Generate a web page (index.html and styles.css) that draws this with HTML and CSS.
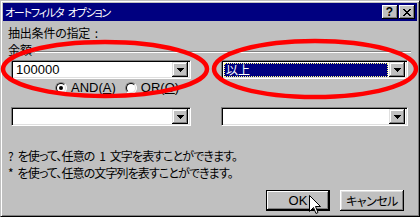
FILE: index.html
```html
<!DOCTYPE html>
<html lang="ja">
<head>
<meta charset="utf-8">
<title>オートフィルタ オプション</title>
<link rel="stylesheet" href="styles.css">
</head>
<body>
<div class="win">
  <div class="title">
    <span class="title-text">オートフィルタ オプション</span>
    <span class="tbtns">
      <span class="tbtn q">?</span>
      <span class="tbtn x"><svg width="8" height="7" viewBox="0 0 8 7"><path d="M0 0h2v1h-2zM6 0h2v1h-2zM1 1h2v1h-2zM5 1h2v1h-2zM2 2h4v1h-4zM3 3h2v1h-2zM2 4h4v1h-4zM1 5h2v1h-2zM5 5h2v1h-2zM0 6h2v1h-2zM6 6h2v1h-2z"/></svg></span>
    </span>
  </div>
  <div class="content">
    <div class="label1">抽出条件の指定 :</div>
    <div class="field"><span class="fname">金額</span><span class="etch"></span></div>
    <div class="row">
      <div class="combo c-left"><span class="val">100000</span><span class="drop"><svg width="7" height="4" viewBox="0 0 7 4"><path d="M0 0h7v1h-1v1h-1v1h-1v1h-1v-1h-1v-1h-1v-1h-1z"/></svg></span></div>
      <div class="combo c-right"><span class="val"><span class="hl">以上</span></span><span class="drop"><svg width="7" height="4" viewBox="0 0 7 4"><path d="M0 0h7v1h-1v1h-1v1h-1v1h-1v-1h-1v-1h-1v-1h-1z"/></svg></span></div>
    </div>
    <div class="radios">
      <label class="radio r-and"><span class="rb on"></span><span>AND(<u>A</u>)</span></label>
      <label class="radio r-or"><span class="rb"></span><span>OR(<u>O</u>)</span></label>
    </div>
    <div class="row row2">
      <div class="combo c-left"><span class="val"></span><span class="drop"><svg width="7" height="4" viewBox="0 0 7 4"><path d="M0 0h7v1h-1v1h-1v1h-1v1h-1v-1h-1v-1h-1v-1h-1z"/></svg></span></div>
      <div class="combo c-right"><span class="val"></span><span class="drop"><svg width="7" height="4" viewBox="0 0 7 4"><path d="M0 0h7v1h-1v1h-1v1h-1v1h-1v-1h-1v-1h-1v-1h-1z"/></svg></span></div>
    </div>
    <p class="hint h1">? を使って、任意の 1 文字を表すことができます。</p>
    <p class="hint">* を使って、任意の文字列を表すことができます。</p>
    <div class="buttons">
      <button class="btn def">OK</button>
      <button class="btn">キャンセル</button>
    </div>
  </div>
  <svg class="marks" width="420" height="217" viewBox="0 0 420 217">
    <ellipse cx="105" cy="69" rx="102" ry="27" fill="none" stroke="#ff0000" stroke-width="4.5"/>
    <ellipse cx="315" cy="69" rx="101" ry="28" fill="none" stroke="#ff0000" stroke-width="4.5"/>
  </svg>
  <svg class="cursor" width="12" height="21" viewBox="0 0 12 21">
    <path d="M0.5 0.5 L0.5 16.5 L4.5 12.5 L7 18.5 L9 17.5 L6.5 11.5 L11.5 11.5 Z" fill="#fff" stroke="#000" stroke-width="1"/>
  </svg>
</div>
</body>
</html>
```

FILE: styles.css
```css
* { box-sizing: border-box; }
html, body { margin: 0; padding: 0; }
body {
  width: 420px;
  height: 217px;
  overflow: hidden;
  background: #c0c0c0;
  font-family: "Noto Sans CJK JP", "Liberation Sans", sans-serif;
  font-size: 12px;
  font-feature-settings: "palt";
  color: #000;
}
.win {
  position: relative;
  width: 420px;
  height: 217px;
  background: #c0c0c0;
  border: 1px solid;
  border-color: #c0c0c0 #000 #000 #c0c0c0;
  box-shadow: inset 1px 1px 0 #fff, inset -1px -1px 0 #808080;
  padding: 2px;
}
.title {
  height: 18px;
  background: #000080;
  color: #fff;
  display: flex;
  align-items: center;
  justify-content: space-between;
  padding: 0 2px 0 2px;
}
.title-text { font-size: 11px; line-height: 14px; letter-spacing: -1.2px; word-spacing: 3px; }
.tbtns { display: flex; gap: 1px; }
.tbtn {
  width: 16px;
  height: 14px;
  background: #c0c0c0;
  box-shadow: inset -1px -1px 0 #000, inset 1px 1px 0 #fff, inset -2px -2px 0 #808080;
  display: flex;
  align-items: center;
  justify-content: center;
  color: #000;
}
.tbtn.q {
  font-family: "Liberation Sans", sans-serif;
  font-weight: bold;
  font-size: 12px;
  line-height: 12px;
  padding-right: 1px;
}
.tbtn.x svg { display: block; }
.content { padding: 5px 0 0 5px; }
.label1 { line-height: 14px; height: 14px; letter-spacing: -0.2px; word-spacing: 2px; }
.field { display: flex; height: 14px; line-height: 14px; margin-top: 3px; }
.etch {
  flex: 1;
  height: 2px;
  margin: 8px 6px 0 3px;
  border-top: 1px solid #808080;
  border-bottom: 1px solid #fff;
}
.row {
  display: flex;
  gap: 30px;
  margin: 3px 0 0 3px;
}
.row2 { margin-top: 12px; }
.combo {
  height: 19px;
  background: #fff;
  border: 1px solid;
  border-color: #808080 #fff #fff #808080;
  box-shadow: inset 1px 1px 0 #000, inset -1px -1px 0 #dfdfdf;
  display: flex;
  padding: 1px 2px 2px 1px;
}
.c-left { width: 180px; }
.c-right { width: 187px; }
.val {
  flex: 1;
  line-height: 15px;
  padding-left: 3px;
  font-family: "Liberation Sans", sans-serif;
  font-size: 13px;
}
.c-right .val { padding: 1px; }
.hl {
  display: block;
  height: 14px;
  background: #000080;
  color: #fff;
  outline: 1px dotted #ffff80;
  outline-offset: -1px;
  line-height: 14px;
  padding-left: 2px;
  font-family: "Noto Sans CJK JP", sans-serif;
  font-size: 12px;
}
.drop {
  width: 16px;
  height: 15px;
  background: #c0c0c0;
  box-shadow: inset -1px -1px 0 #000, inset 1px 1px 0 #dfdfdf, inset -2px -2px 0 #808080, inset 2px 2px 0 #fff;
  display: flex;
  align-items: center;
  justify-content: center;
}
.drop svg { display: block; margin-top: 1px; }
.radios {
  display: flex;
  height: 14px;
  margin: 2px 0 0 47px;
  line-height: 14px;
  font-family: "Liberation Sans", sans-serif;
  font-size: 13px;
}
.radio { display: flex; align-items: center; gap: 4px; }
.r-or { margin-left: 9px; }
.rb {
  width: 12px;
  height: 12px;
  border-radius: 50%;
  background: #fff;
  border: 1px solid;
  border-color: #808080 #fff #fff #808080;
  position: relative;
}
.rb::before {
  content: "";
  position: absolute;
  inset: 0;
  border-radius: 50%;
  border: 1px solid;
  border-color: #000 #dfdfdf #dfdfdf #000;
}
.rb.on::after {
  content: "";
  position: absolute;
  left: 3px;
  top: 3px;
  width: 4px;
  height: 4px;
  border-radius: 50%;
  background: #000;
}
.hint { margin: 3px 0 0 0; line-height: 14px; height: 14px; letter-spacing: -0.9px; word-spacing: 3px; }
.h1 { margin-top: 23px; }
.buttons {
  display: flex;
  justify-content: flex-end;
  gap: 10px;
  margin: 10px 13px 0 0;
}
.btn {
  width: 64px;
  height: 21px;
  padding: 0;
  background: #c0c0c0;
  border: none;
  box-shadow: inset -1px -1px 0 #000, inset 1px 1px 0 #fff, inset -2px -2px 0 #808080, inset 2px 2px 0 #dfdfdf;
  font-family: "Noto Sans CJK JP", sans-serif;
  font-feature-settings: "palt";
  font-size: 12px;
  letter-spacing: -0.5px;
  color: #000;
}
.btn.def {
  border: 1px solid #000;
  box-shadow: inset -1px -1px 0 #000, inset 1px 1px 0 #fff, inset -2px -2px 0 #808080;
  font-family: "Liberation Sans", sans-serif;
  font-size: 13px;
  letter-spacing: 0;
}
.marks {
  position: absolute;
  left: -1px;
  top: -1px;
  pointer-events: none;
}
.cursor {
  position: absolute;
  left: 308px;
  top: 194px;
}
```
